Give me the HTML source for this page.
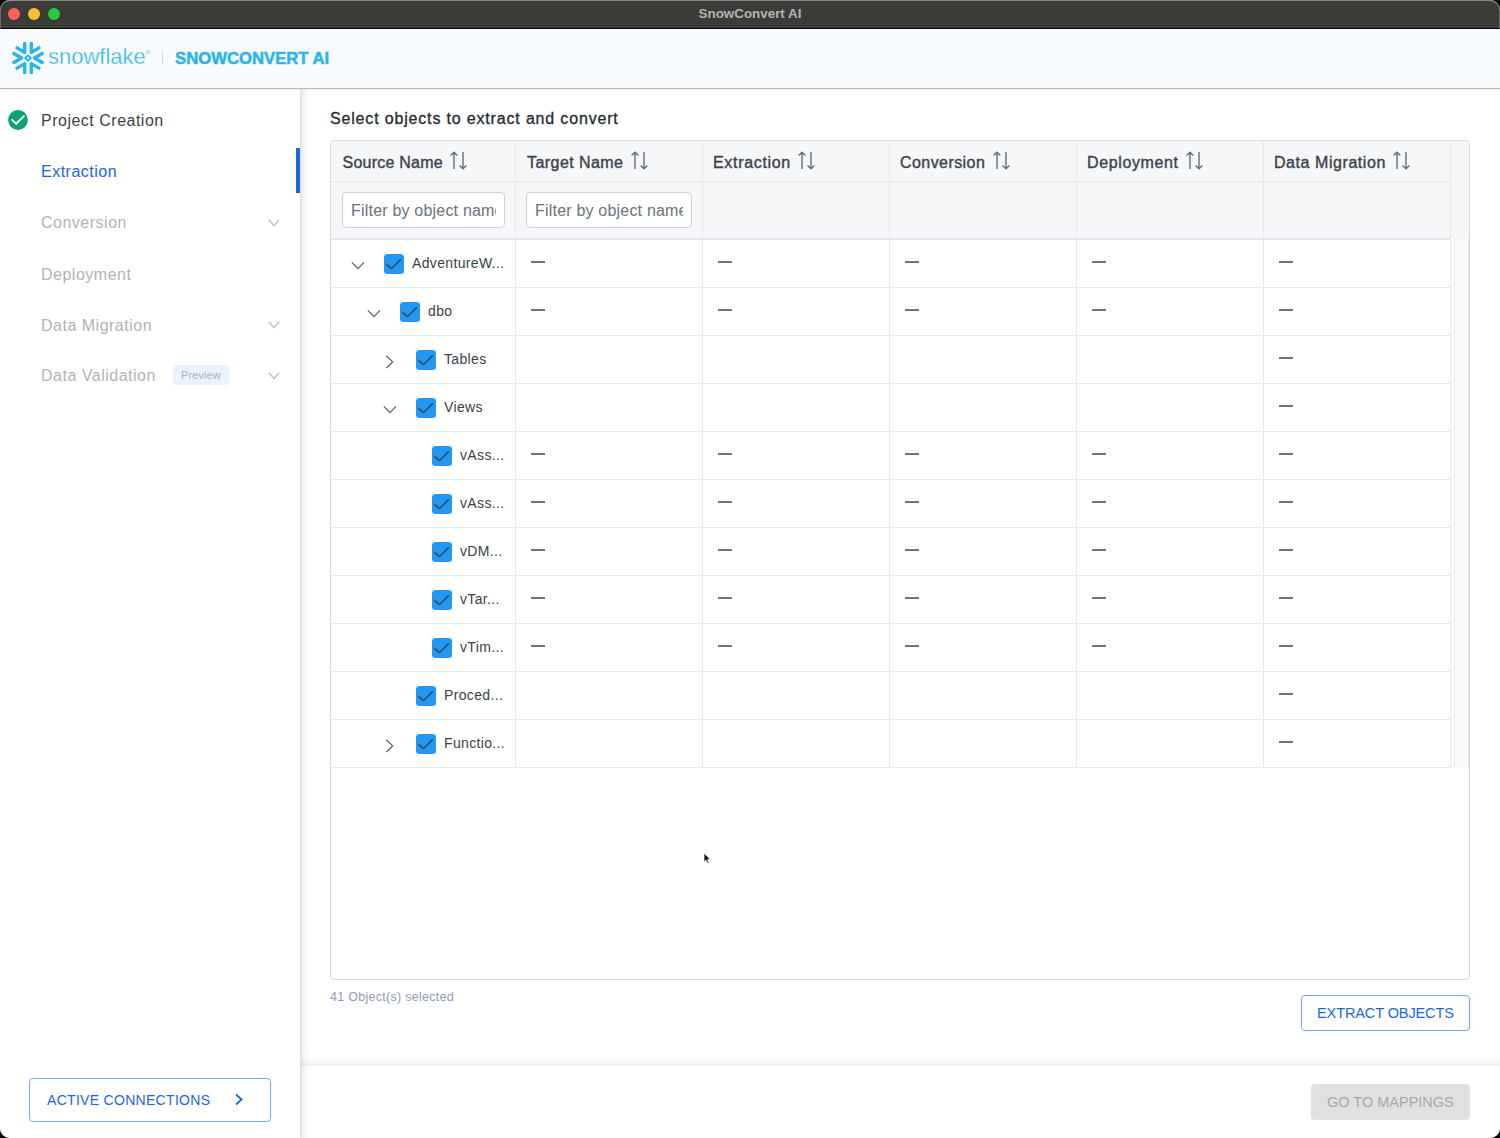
<!DOCTYPE html>
<html><head><meta charset="utf-8">
<style>
*{box-sizing:border-box;margin:0;padding:0}
html,body{width:1500px;height:1138px;overflow:hidden;background:#000;font-family:"Liberation Sans",sans-serif}
#win{position:absolute;left:0;top:0;width:1500px;height:1138px;border-radius:10px;overflow:hidden;background:#fff}
.abs{position:absolute}
#titlebar{left:0;top:0;width:1500px;height:29px;background:#3b3b38;border-bottom:1px solid #000;border-top:1px solid #8a8a8a;border-left:1px solid #6a6a68;border-right:1px solid #6a6a68;border-radius:10px 10px 0 0}
.tl{position:absolute;top:7px;width:12px;height:12px;border-radius:50%}
#ttl{position:absolute;left:-1px;width:1500px;top:5px;text-align:center;color:#b4b4b4;font-weight:700;font-size:13.4px;line-height:16px}
#hdr{left:0;top:29px;width:1500px;height:60px;background:#f7fbfe;border-bottom:1px solid #b9b9b9;box-shadow:0 1px 2px rgba(0,0,0,0.06);z-index:3}
#side{left:0;top:89px;width:300px;height:1049px;background:#fff;z-index:2}
#sshadow{left:300px;top:89px;width:12px;height:1049px;z-index:2;background:linear-gradient(to right,rgba(0,0,0,0.13),rgba(0,0,0,0.05) 25%,rgba(0,0,0,0.015) 60%,rgba(0,0,0,0))}
.nav{position:absolute;left:41px;font-size:16px;letter-spacing:0.5px;line-height:18px;white-space:nowrap}
.chev{position:absolute;left:268px}
#main{left:301px;top:89px;width:1199px;height:1049px;background:#fff}
.t{position:absolute;white-space:nowrap}
.hd{top:154px;font-size:16px;line-height:18px;font-weight:400;color:#3d434b;-webkit-text-stroke:0.4px #3d434b;letter-spacing:0.35px}
.sort{margin-left:7.5px}
.hd svg{position:relative;vertical-align:top;top:-3px;-webkit-text-stroke:0}
.inp{top:192px;height:36px;background:#fff;border:1px solid #cdd3db;border-radius:4px;overflow:hidden}
.inp span{position:absolute;left:8px;right:8px;top:9px;font-size:16px;line-height:18px;color:#6a737e;white-space:nowrap;overflow:hidden;letter-spacing:0.2px}
.rt{font-size:14px;line-height:16px;color:#3a3f47;letter-spacing:0.35px}
.dash{width:14px;height:2px;background:#767676}
#content{position:absolute;left:0;top:0}
</style></head><body>
<div id="win">
  <div id="titlebar" class="abs">
    <div class="tl" style="left:7px;background:#fe5f57"></div>
    <div class="tl" style="left:27px;background:#febc2e"></div>
    <div class="tl" style="left:47px;background:#28c840"></div>
    <div id="ttl">SnowConvert AI</div>
  </div>
  <div id="hdr" class="abs">
    <svg class="abs" style="left:12px;top:13px" width="32" height="32" viewBox="-16 -16 32 32">
      <g stroke="#29b5e8" stroke-width="3.4" stroke-linecap="round" stroke-linejoin="round" fill="none">
        <polyline id="chv" points="-14.2,-4.4 -6.5,0 -14.2,4.4"/>
        <use href="#chv" transform="rotate(60)"/>
        <use href="#chv" transform="rotate(120)"/>
        <use href="#chv" transform="rotate(180)"/>
        <use href="#chv" transform="rotate(240)"/>
        <use href="#chv" transform="rotate(300)"/>
      </g>
      <path d="M0,-4.1 L4.1,0 L0,4.1 L-4.1,0 Z M0,-1.3 L-1.3,0 L0,1.3 L1.3,0 Z" fill="#29b5e8" fill-rule="evenodd"/>
    </svg>
    <div class="t" style="left:48px;top:14.5px;font-size:22px;line-height:26px;color:#29b5e8;-webkit-text-stroke:0.35px #f7fbfe">snowflake</div>
    <div class="abs" style="left:146px;top:21px;width:3.5px;height:3.5px;border:0.6px solid #7fd0ee;border-radius:50%"></div>
    <div class="abs" style="left:162px;top:21px;width:1px;height:15px;background:#d4d8dc"></div>
    <div class="t" style="left:175px;top:20px;font-size:16.7px;font-weight:700;line-height:20px;color:#29b5e8;-webkit-text-stroke:0.5px #29b5e8">SNOWCONVERT AI</div>
  </div>
  <div id="side" class="abs">
    <svg class="abs" style="left:8px;top:21px" width="20" height="20" viewBox="0 0 20 20">
      <circle cx="10" cy="10" r="9.9" fill="#07a374"/>
      <polyline points="4.1,9.9 8.1,13.8 15.8,6.1" fill="none" stroke="#fff" stroke-width="2" stroke-linecap="round" stroke-linejoin="miter"/>
    </svg>
    <div class="nav" style="top:23px;color:#3a3f47">Project Creation</div>
    <div class="nav" style="top:74px;color:#1b66e0">Extraction</div>
    <div class="abs" style="left:296px;top:59px;width:4px;height:45px;background:#1b66e6"></div>
    <div class="nav" style="top:125px;color:#b3b3b3">Conversion</div>
    <svg class="chev" style="top:129.5px" width="12" height="8" viewBox="0 0 12 8"><polyline points="0.8,0.8 6,6.6 11.2,0.8" fill="none" stroke="#c4c4c4" stroke-width="1.6"/></svg>
    <div class="nav" style="top:176.5px;color:#b3b3b3">Deployment</div>
    <div class="nav" style="top:227.5px;color:#b3b3b3">Data Migration</div>
    <svg class="chev" style="top:231.5px" width="12" height="8" viewBox="0 0 12 8"><polyline points="0.8,0.8 6,6.6 11.2,0.8" fill="none" stroke="#c4c4c4" stroke-width="1.6"/></svg>
    <div class="nav" style="top:278px;color:#b3b3b3">Data Validation</div>
    <div class="abs" style="left:173px;top:276px;width:56px;height:20px;background:#eaf2fd;border-radius:4px"></div>
    <div class="t" style="left:181px;top:280px;font-size:11px;line-height:13px;color:#a5b3c9;letter-spacing:0.1px">Preview</div>
    <svg class="chev" style="top:282.5px" width="12" height="8" viewBox="0 0 12 8"><polyline points="0.8,0.8 6,6.6 11.2,0.8" fill="none" stroke="#c4c4c4" stroke-width="1.6"/></svg>
    <div class="abs" style="left:29px;top:989px;width:242px;height:44px;border:1px solid #7aa7f0;border-radius:4px"></div>
    <div class="t" style="left:47px;top:1003px;font-size:14px;line-height:16px;color:#1b66e0;letter-spacing:0.3px">ACTIVE CONNECTIONS</div>
    <svg class="abs" style="left:234px;top:1004px" width="10" height="13" viewBox="0 0 10 13"><polyline points="2,1.5 7.5,6.5 2,11.5" fill="none" stroke="#1b66e0" stroke-width="1.8"/></svg>
  </div>
  <div id="main" class="abs"></div>
  <div id="sshadow" class="abs"></div>
  <div id="content">
    <div class="t" style="left:330px;top:108.5px;font-size:16px;line-height:20px;font-weight:400;color:#262a30;-webkit-text-stroke:0.3px #262a30;letter-spacing:0.83px">Select objects to extract and convert</div>
    <div class="abs" style="left:330px;top:140px;width:1140px;height:840px;border:1px solid #d6dae3;border-radius:4px;background:#fff"></div>
    <div class="abs" style="left:331px;top:141px;width:1138px;height:98px;background:#f6f7f9;border-radius:3px 3px 0 0"></div>
    <div class="abs" style="left:331px;top:181px;width:1119px;height:1px;background:#e6e8ec"></div>
    <div class="abs" style="left:331px;top:238px;width:1119px;height:2px;background:#e4e7ec"></div>
    <div class="abs" style="left:515px;top:141px;width:1px;height:627px;background:#e6e8ee"></div>
    <div class="abs" style="left:702px;top:141px;width:1px;height:627px;background:#e6e8ee"></div>
    <div class="abs" style="left:889px;top:141px;width:1px;height:627px;background:#e6e8ee"></div>
    <div class="abs" style="left:1076px;top:141px;width:1px;height:627px;background:#e6e8ee"></div>
    <div class="abs" style="left:1263px;top:141px;width:1px;height:627px;background:#e6e8ee"></div>
    <div class="abs" style="left:1450px;top:141px;width:1px;height:627px;background:#e6e8ee"></div>
    <div class="abs" style="left:1454px;top:239px;width:15px;height:529px;background:#fafafa;border-left:1px solid #ebebeb;border-right:1px solid #ebebeb"></div>
    <div class="t hd" style="left:342.5px;letter-spacing:0.23px">Source Name<svg class="sort" width="17" height="19" viewBox="0 0 17 19"><path d="M4,1 V18 M0.6,4.6 L4,1.2 L7.4,4.6 M13,1 V18 M9.6,14.4 L13,17.8 L16.4,14.4" fill="none" stroke="#656d78" stroke-width="1.4"/></svg></div>
    <div class="t hd" style="left:527px;letter-spacing:0.44px">Target Name<svg class="sort" width="17" height="19" viewBox="0 0 17 19"><path d="M4,1 V18 M0.6,4.6 L4,1.2 L7.4,4.6 M13,1 V18 M9.6,14.4 L13,17.8 L16.4,14.4" fill="none" stroke="#656d78" stroke-width="1.4"/></svg></div>
    <div class="t hd" style="left:713px;letter-spacing:0.68px">Extraction<svg class="sort" width="17" height="19" viewBox="0 0 17 19"><path d="M4,1 V18 M0.6,4.6 L4,1.2 L7.4,4.6 M13,1 V18 M9.6,14.4 L13,17.8 L16.4,14.4" fill="none" stroke="#656d78" stroke-width="1.4"/></svg></div>
    <div class="t hd" style="left:900px;letter-spacing:0.43px">Conversion<svg class="sort" width="17" height="19" viewBox="0 0 17 19"><path d="M4,1 V18 M0.6,4.6 L4,1.2 L7.4,4.6 M13,1 V18 M9.6,14.4 L13,17.8 L16.4,14.4" fill="none" stroke="#656d78" stroke-width="1.4"/></svg></div>
    <div class="t hd" style="left:1087px;letter-spacing:0.63px">Deployment<svg class="sort" width="17" height="19" viewBox="0 0 17 19"><path d="M4,1 V18 M0.6,4.6 L4,1.2 L7.4,4.6 M13,1 V18 M9.6,14.4 L13,17.8 L16.4,14.4" fill="none" stroke="#656d78" stroke-width="1.4"/></svg></div>
    <div class="t hd" style="left:1274px;letter-spacing:0.56px">Data Migration<svg class="sort" width="17" height="19" viewBox="0 0 17 19"><path d="M4,1 V18 M0.6,4.6 L4,1.2 L7.4,4.6 M13,1 V18 M9.6,14.4 L13,17.8 L16.4,14.4" fill="none" stroke="#656d78" stroke-width="1.4"/></svg></div>
    <div class="abs inp" style="left:342px;width:163px"><span>Filter by object name</span></div>
    <div class="abs inp" style="left:526px;width:166px"><span>Filter by object name</span></div>
    <div class="abs" style="left:331px;top:287px;width:1119px;height:1px;background:#e6e8ee"></div>
    <svg class="abs" style="left:350px;top:261px" width="16" height="10" viewBox="0 0 16 10"><polyline points="1.8,1.4 7.9,7.6 14,1.4" fill="none" stroke="#59616c" stroke-width="1.3"/></svg>
    <svg class="abs" style="left:384px;top:254px" width="20" height="20" viewBox="0 0 20 20"><rect width="20" height="20" rx="3.5" fill="#2196f3"/><polyline points="2.8,10.6 7.5,14.7 16.8,5.2" fill="none" stroke="#373c45" stroke-width="1.3"/></svg>
    <div class="t rt" style="left:412px;top:255px">AdventureW...</div>
    <div class="abs dash" style="left:531px;top:261px"></div>
    <div class="abs dash" style="left:718px;top:261px"></div>
    <div class="abs dash" style="left:905px;top:261px"></div>
    <div class="abs dash" style="left:1092px;top:261px"></div>
    <div class="abs dash" style="left:1279px;top:261px"></div>
    <div class="abs" style="left:331px;top:335px;width:1119px;height:1px;background:#e6e8ee"></div>
    <svg class="abs" style="left:366px;top:309px" width="16" height="10" viewBox="0 0 16 10"><polyline points="1.8,1.4 7.9,7.6 14,1.4" fill="none" stroke="#59616c" stroke-width="1.3"/></svg>
    <svg class="abs" style="left:400px;top:302px" width="20" height="20" viewBox="0 0 20 20"><rect width="20" height="20" rx="3.5" fill="#2196f3"/><polyline points="2.8,10.6 7.5,14.7 16.8,5.2" fill="none" stroke="#373c45" stroke-width="1.3"/></svg>
    <div class="t rt" style="left:428px;top:303px">dbo</div>
    <div class="abs dash" style="left:531px;top:309px"></div>
    <div class="abs dash" style="left:718px;top:309px"></div>
    <div class="abs dash" style="left:905px;top:309px"></div>
    <div class="abs dash" style="left:1092px;top:309px"></div>
    <div class="abs dash" style="left:1279px;top:309px"></div>
    <div class="abs" style="left:331px;top:383px;width:1119px;height:1px;background:#e6e8ee"></div>
    <svg class="abs" style="left:385px;top:354px" width="10" height="16" viewBox="0 0 10 16"><polyline points="1.4,1.8 7.6,7.9 1.4,14" fill="none" stroke="#59616c" stroke-width="1.3"/></svg>
    <svg class="abs" style="left:416px;top:350px" width="20" height="20" viewBox="0 0 20 20"><rect width="20" height="20" rx="3.5" fill="#2196f3"/><polyline points="2.8,10.6 7.5,14.7 16.8,5.2" fill="none" stroke="#373c45" stroke-width="1.3"/></svg>
    <div class="t rt" style="left:444px;top:351px">Tables</div>
    <div class="abs dash" style="left:1279px;top:357px"></div>
    <div class="abs" style="left:331px;top:431px;width:1119px;height:1px;background:#e6e8ee"></div>
    <svg class="abs" style="left:382px;top:405px" width="16" height="10" viewBox="0 0 16 10"><polyline points="1.8,1.4 7.9,7.6 14,1.4" fill="none" stroke="#59616c" stroke-width="1.3"/></svg>
    <svg class="abs" style="left:416px;top:398px" width="20" height="20" viewBox="0 0 20 20"><rect width="20" height="20" rx="3.5" fill="#2196f3"/><polyline points="2.8,10.6 7.5,14.7 16.8,5.2" fill="none" stroke="#373c45" stroke-width="1.3"/></svg>
    <div class="t rt" style="left:444px;top:399px">Views</div>
    <div class="abs dash" style="left:1279px;top:405px"></div>
    <div class="abs" style="left:331px;top:479px;width:1119px;height:1px;background:#e6e8ee"></div>
    <svg class="abs" style="left:432px;top:446px" width="20" height="20" viewBox="0 0 20 20"><rect width="20" height="20" rx="3.5" fill="#2196f3"/><polyline points="2.8,10.6 7.5,14.7 16.8,5.2" fill="none" stroke="#373c45" stroke-width="1.3"/></svg>
    <div class="t rt" style="left:460px;top:447px">vAss...</div>
    <div class="abs dash" style="left:531px;top:453px"></div>
    <div class="abs dash" style="left:718px;top:453px"></div>
    <div class="abs dash" style="left:905px;top:453px"></div>
    <div class="abs dash" style="left:1092px;top:453px"></div>
    <div class="abs dash" style="left:1279px;top:453px"></div>
    <div class="abs" style="left:331px;top:527px;width:1119px;height:1px;background:#e6e8ee"></div>
    <svg class="abs" style="left:432px;top:494px" width="20" height="20" viewBox="0 0 20 20"><rect width="20" height="20" rx="3.5" fill="#2196f3"/><polyline points="2.8,10.6 7.5,14.7 16.8,5.2" fill="none" stroke="#373c45" stroke-width="1.3"/></svg>
    <div class="t rt" style="left:460px;top:495px">vAss...</div>
    <div class="abs dash" style="left:531px;top:501px"></div>
    <div class="abs dash" style="left:718px;top:501px"></div>
    <div class="abs dash" style="left:905px;top:501px"></div>
    <div class="abs dash" style="left:1092px;top:501px"></div>
    <div class="abs dash" style="left:1279px;top:501px"></div>
    <div class="abs" style="left:331px;top:575px;width:1119px;height:1px;background:#e6e8ee"></div>
    <svg class="abs" style="left:432px;top:542px" width="20" height="20" viewBox="0 0 20 20"><rect width="20" height="20" rx="3.5" fill="#2196f3"/><polyline points="2.8,10.6 7.5,14.7 16.8,5.2" fill="none" stroke="#373c45" stroke-width="1.3"/></svg>
    <div class="t rt" style="left:460px;top:543px">vDM...</div>
    <div class="abs dash" style="left:531px;top:549px"></div>
    <div class="abs dash" style="left:718px;top:549px"></div>
    <div class="abs dash" style="left:905px;top:549px"></div>
    <div class="abs dash" style="left:1092px;top:549px"></div>
    <div class="abs dash" style="left:1279px;top:549px"></div>
    <div class="abs" style="left:331px;top:623px;width:1119px;height:1px;background:#e6e8ee"></div>
    <svg class="abs" style="left:432px;top:590px" width="20" height="20" viewBox="0 0 20 20"><rect width="20" height="20" rx="3.5" fill="#2196f3"/><polyline points="2.8,10.6 7.5,14.7 16.8,5.2" fill="none" stroke="#373c45" stroke-width="1.3"/></svg>
    <div class="t rt" style="left:460px;top:591px">vTar...</div>
    <div class="abs dash" style="left:531px;top:597px"></div>
    <div class="abs dash" style="left:718px;top:597px"></div>
    <div class="abs dash" style="left:905px;top:597px"></div>
    <div class="abs dash" style="left:1092px;top:597px"></div>
    <div class="abs dash" style="left:1279px;top:597px"></div>
    <div class="abs" style="left:331px;top:671px;width:1119px;height:1px;background:#e6e8ee"></div>
    <svg class="abs" style="left:432px;top:638px" width="20" height="20" viewBox="0 0 20 20"><rect width="20" height="20" rx="3.5" fill="#2196f3"/><polyline points="2.8,10.6 7.5,14.7 16.8,5.2" fill="none" stroke="#373c45" stroke-width="1.3"/></svg>
    <div class="t rt" style="left:460px;top:639px">vTim...</div>
    <div class="abs dash" style="left:531px;top:645px"></div>
    <div class="abs dash" style="left:718px;top:645px"></div>
    <div class="abs dash" style="left:905px;top:645px"></div>
    <div class="abs dash" style="left:1092px;top:645px"></div>
    <div class="abs dash" style="left:1279px;top:645px"></div>
    <div class="abs" style="left:331px;top:719px;width:1119px;height:1px;background:#e6e8ee"></div>
    <svg class="abs" style="left:416px;top:686px" width="20" height="20" viewBox="0 0 20 20"><rect width="20" height="20" rx="3.5" fill="#2196f3"/><polyline points="2.8,10.6 7.5,14.7 16.8,5.2" fill="none" stroke="#373c45" stroke-width="1.3"/></svg>
    <div class="t rt" style="left:444px;top:687px">Proced...</div>
    <div class="abs dash" style="left:1279px;top:693px"></div>
    <div class="abs" style="left:331px;top:767px;width:1119px;height:1px;background:#e6e8ee"></div>
    <svg class="abs" style="left:385px;top:738px" width="10" height="16" viewBox="0 0 10 16"><polyline points="1.4,1.8 7.6,7.9 1.4,14" fill="none" stroke="#59616c" stroke-width="1.3"/></svg>
    <svg class="abs" style="left:416px;top:734px" width="20" height="20" viewBox="0 0 20 20"><rect width="20" height="20" rx="3.5" fill="#2196f3"/><polyline points="2.8,10.6 7.5,14.7 16.8,5.2" fill="none" stroke="#373c45" stroke-width="1.3"/></svg>
    <div class="t rt" style="left:444px;top:735px">Functio...</div>
    <div class="abs dash" style="left:1279px;top:741px"></div>
    <div class="t" style="left:330px;top:989px;font-size:12.5px;line-height:16px;color:#8e9bb3;letter-spacing:0.28px">41 Object(s) selected</div>
    <div class="abs" style="left:1301px;top:995px;width:169px;height:36px;border:1px solid #76a5f2;border-radius:4px"></div>
    <div class="t" style="left:1317px;top:1004.5px;font-size:14.5px;line-height:16px;color:#1b66e0;letter-spacing:-0.1px">EXTRACT OBJECTS</div>
    <div class="abs" style="left:301px;top:1054px;width:1199px;height:12px;background:linear-gradient(to bottom,rgba(0,0,0,0),rgba(0,0,0,0.015) 50%,rgba(0,0,0,0.05) 90%,rgba(0,0,0,0.07))"></div>
    <div class="abs" style="left:1311px;top:1084px;width:159px;height:36px;background:#e0e0e0;border-radius:4px"></div>
    <div class="t" style="left:1327px;top:1093.5px;font-size:14.5px;line-height:16px;color:#a8a8a8;letter-spacing:0px">GO TO MAPPINGS</div>
    <svg class="abs" style="left:701px;top:851.3px;z-index:9" width="12" height="14" viewBox="0 0 12 14"><path d="M3,2 L3,11 L5,9.2 L6.6,12.4 L8,11.8 L6.5,8.6 L9.2,8.4 Z" fill="#111" stroke="#fff" stroke-width="0.8" stroke-linejoin="round"/></svg>
  </div>
</div>
</body></html>
